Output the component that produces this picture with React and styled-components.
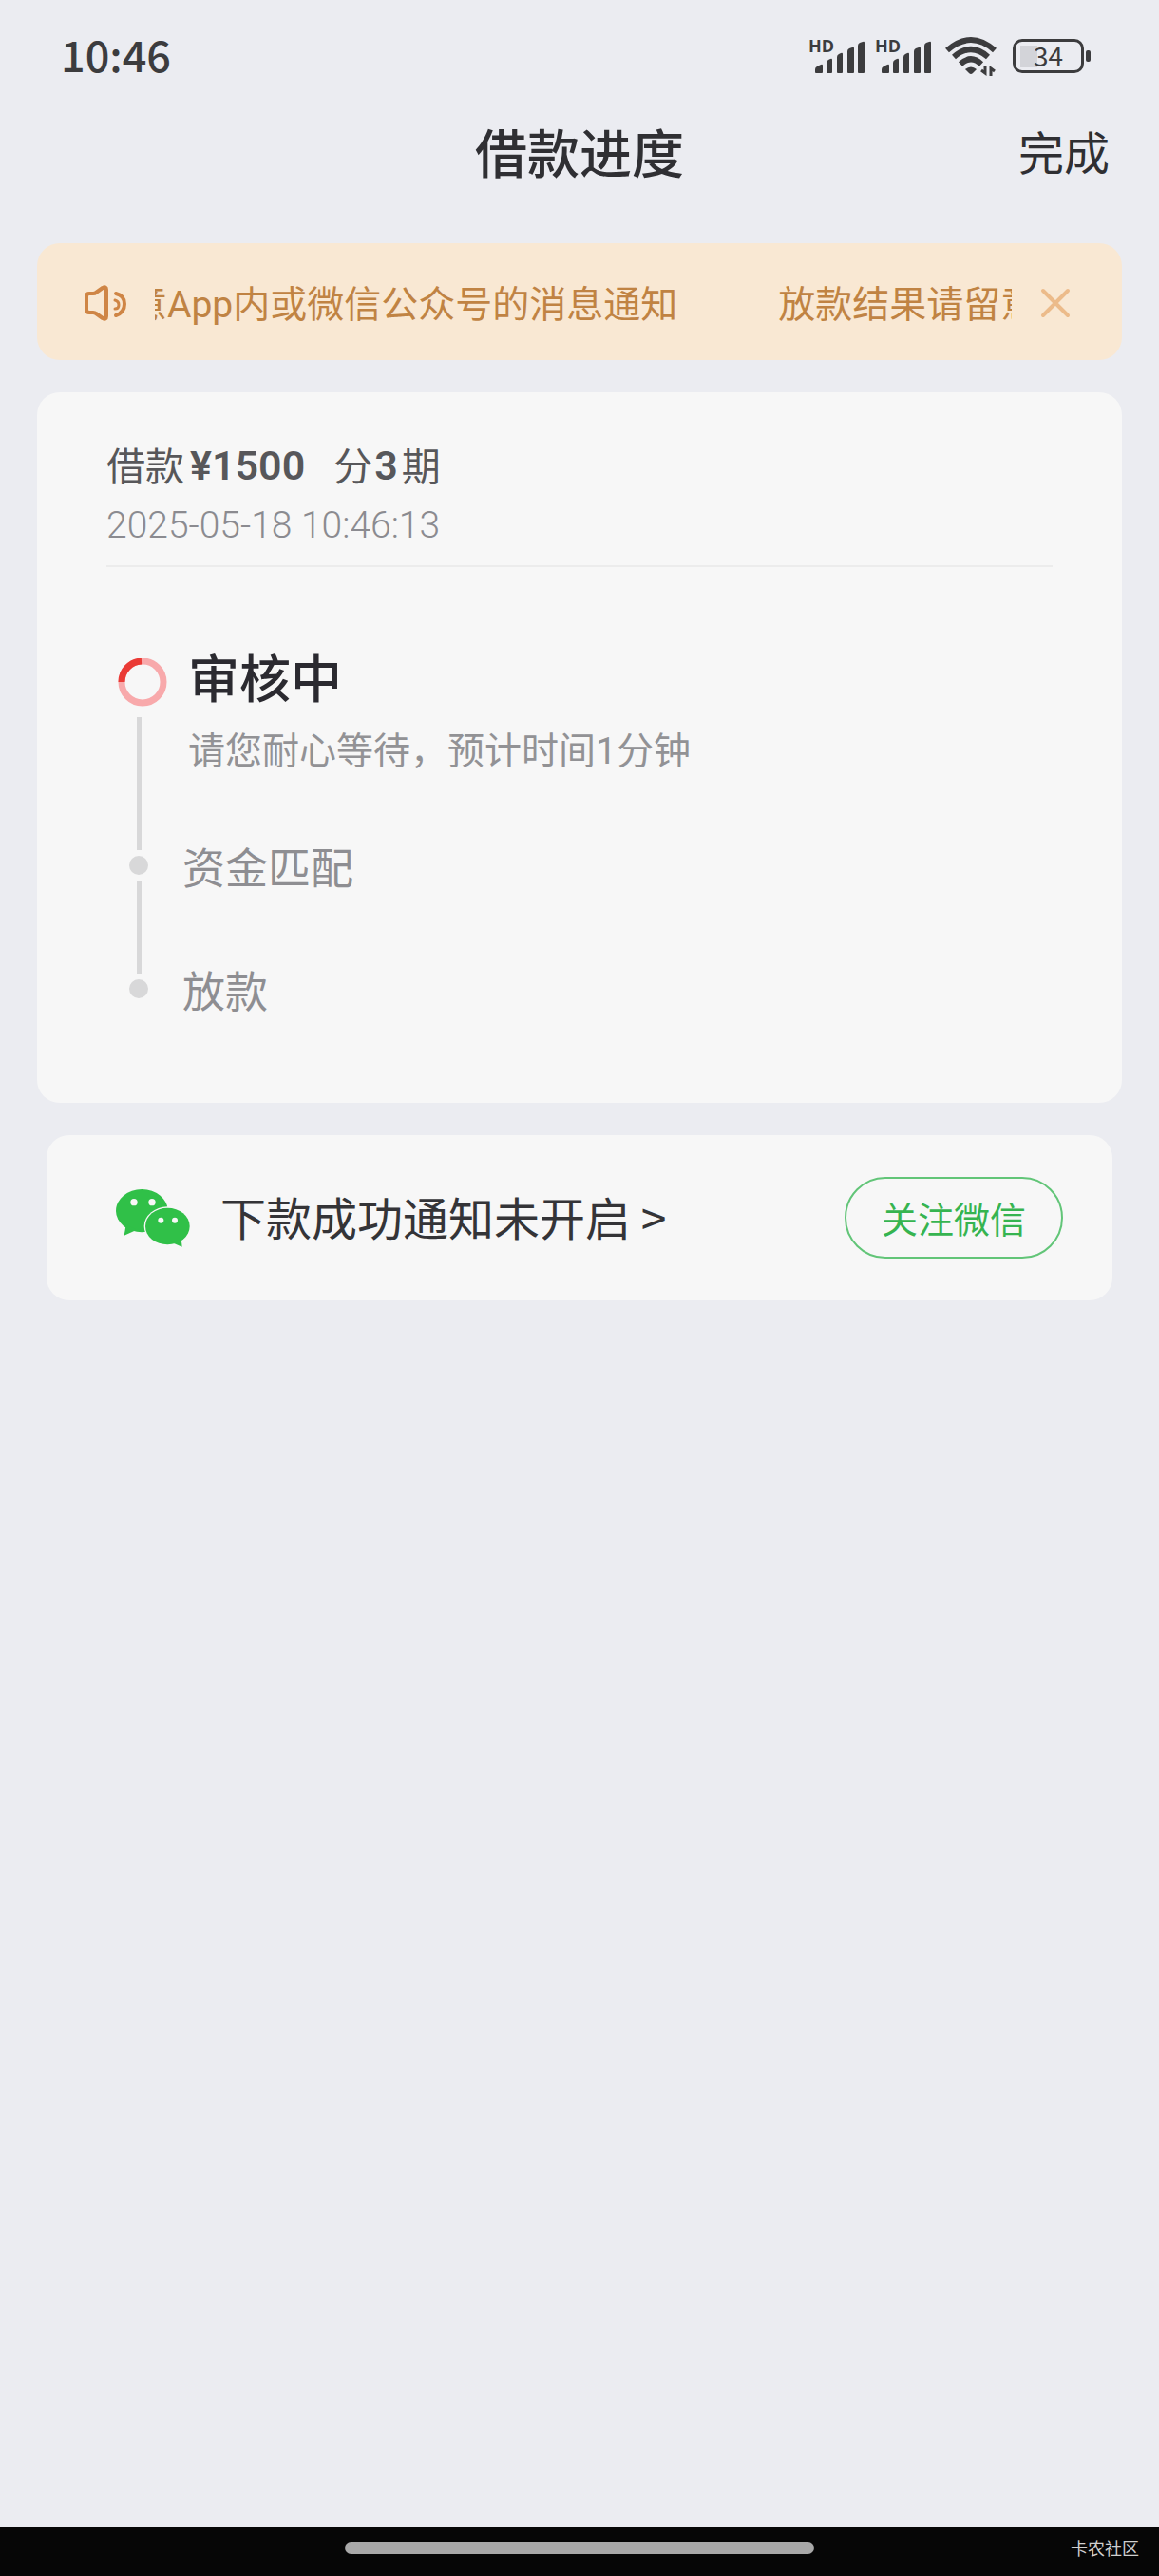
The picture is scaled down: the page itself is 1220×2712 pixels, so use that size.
import React from 'react';

import styled, { createGlobalStyle } from 'styled-components';

const GlobalStyle = createGlobalStyle`
  * {
    box-sizing: border-box;
  }
  body {
    margin: 0;
    background: #ebecf1;
    font-family: 'Noto Sans CJK SC', sans-serif;
    color: #2f2f33;
  }
  button {
    padding: 0;
    border: none;
    background: none;
    font-family: inherit;
    cursor: pointer;
  }
  svg {
    display: block;
    flex-shrink: 0;
  }
`;

const Page = styled.div`
  display: flex;
  flex-direction: column;
  min-height: 100vh;
`;

const StatusBar = styled.div`
  display: flex;
  align-items: center;
  justify-content: space-between;
  height: 118px;
  padding: 0 72px 0 64px;
  color: #3c3c3e;
`;

const Clock = styled.span`
  padding-bottom: 6px;
  font-size: 45px;
  font-weight: 500;
`;

const StatusIcons = styled.div`
  display: flex;
  align-items: center;
  gap: 14px;
`;

const Signals = styled.div`
  display: flex;
  gap: 10px;
`;

const Battery = styled.div`
  display: flex;
  align-items: center;
  gap: 2px;
  &::after {
    content: '';
    width: 5px;
    height: 12px;
    border-radius: 2px;
    background: #3c3c3e;
  }
`;

const BatteryBody = styled.div`
  display: flex;
  justify-content: center;
  width: 75px;
  height: 36px;
  border: 3px solid #3c3c3e;
  border-radius: 10px;
  background: linear-gradient(#d3d4d9, #d3d4d9) 5px center / 18px 23px no-repeat;
  font-size: 28px;
  line-height: 28px;
`;

const Header = styled.header`
  display: grid;
  grid-template-columns: 1fr auto 1fr;
  align-items: center;
  height: 80px;
  padding: 0 52px;
`;

const HeaderTitle = styled.h1`
  grid-column: 2;
  margin: 0;
  font-size: 55px;
  font-weight: 500;
  line-height: 80px;
`;

const DoneButton = styled.button`
  justify-self: end;
  font-size: 48px;
  line-height: 80px;
  color: #2f2f33;
`;

const Main = styled.main`
  display: flex;
  flex-direction: column;
  gap: 34px;
  margin-top: 58px;
  padding: 0 39px;
`;

const Notice = styled.div`
  display: flex;
  align-items: center;
  gap: 28px;
  height: 123px;
  padding: 2px 52px 0 48px;
  border-radius: 24px;
  background: #f9e8d3;
  color: #c08343;
`;

const Marquee = styled.div`
  flex: 1;
  padding-top: 4px;
  overflow: hidden;
`;

const MarqueeTrack = styled.div`
  display: flex;
  gap: 106px;
  width: max-content;
  transform: translateX(-260px);
  font-family: 'Roboto', 'Noto Sans CJK SC', sans-serif;
  font-size: 39px;
  line-height: 56px;
  white-space: nowrap;
`;

const CloseButton = styled.button`
  display: flex;
  align-items: center;
  justify-content: center;
  width: 36px;
  height: 36px;
  color: #ecbb8a;
`;

const Card = styled.section`
  padding: 48px 73px 0;
  border-radius: 24px;
  background: #f7f7f7;
`;

const Summary = styled.div`
  padding-bottom: 16px;
  border-bottom: 2px solid #ececec;
`;

const Loan = styled.div`
  display: flex;
  align-items: center;
  font-size: 41px;
  line-height: 54px;
  color: #57575a;
`;

const Amount = styled.strong`
  margin: 0 6px;
  padding-top: 4px;
  font-family: 'Roboto', sans-serif;
  font-size: 43px;
  font-weight: 600;
  line-height: 50px;
`;

const Count = styled(Amount)`
  margin: 0 4px 0 2px;
`;

const Term = styled.span`
  margin-left: 24px;
`;

const LoanTime = styled.time`
  display: block;
  margin-top: 12px;
  font-family: 'Roboto', sans-serif;
  font-size: 39px;
  font-weight: 300;
  line-height: 52px;
  color: #8b8b90;
`;

const Steps = styled.ol`
  margin: 0;
  padding: 88px 0 0 12px;
  list-style: none;
`;

const Step = styled.li`
  display: flex;
  gap: ${({ $active }) => ($active ? 30 : 24)}px;
`;

const Marker = styled.div`
  display: flex;
  flex-direction: column;
  align-items: center;
  width: 44px;
  padding: ${({ $active }) => ($active ? 8 : 0)}px 0 6px;
  svg {
    align-self: flex-start;
    margin-bottom: 4px;
  }
`;

const Dot = styled.span`
  width: 20px;
  height: 20px;
  border-radius: 50%;
  background: #d8d8d9;
`;

const Line = styled.span`
  flex: 1;
  width: 5px;
  margin-top: 7px;
  background: #d8d8d9;
`;

const ActiveBody = styled.div`
  padding-bottom: 84px;
`;

const ActiveTitle = styled.h2`
  margin: 0 0 26px;
  font-size: 54px;
  font-weight: 500;
  line-height: 54px;
  color: #2b2a30;
`;

const Hint = styled.p`
  margin: 0;
  font-family: 'Roboto', 'Noto Sans CJK SC', sans-serif;
  font-size: 39px;
  line-height: 52px;
  color: #929295;
`;

const StepTitle = styled.h2`
  margin: 0;
  padding-bottom: 108px;
  font-size: 45px;
  font-weight: 400;
  line-height: 22px;
  color: #8e8e92;
`;

const WechatCard = styled.section`
  display: flex;
  align-items: center;
  height: 174px;
  margin: 0 10px;
  padding: 0 52px 0 73px;
  border-radius: 24px;
  background: #f7f7f7;
`;

const WechatLink = styled.a`
  flex: 1;
  margin-left: 32px;
  padding-bottom: 4px;
  font-size: 48px;
  line-height: 72px;
  color: #343437;
  text-decoration: none;
`;

const FollowButton = styled.button`
  height: 86px;
  padding: 0 37px 2px;
  border: 2px solid #62c578;
  border-radius: 43px;
  font-size: 38px;
  color: #36b450;
`;

const NavBar = styled.footer`
  display: grid;
  grid-template-columns: 1fr 42% 1fr;
  align-items: center;
  height: 52px;
  margin-top: auto;
  padding: 0 21px 8px;
  background: #060606;
`;

const HomeIndicator = styled.span`
  grid-column: 2;
  height: 13px;
  border-radius: 7px;
  background: #a8a8a8;
`;

const Credit = styled.span`
  justify-self: end;
  font-size: 18px;
  line-height: 24px;
  color: #cfcfcf;
`;

const SignalIcon = () => (
  <svg width="60" height="50" viewBox="-2 -6 60 50" fill="currentColor">
    <text
      x="-1"
      y="15"
      fontFamily="Open Sans, sans-serif"
      fontSize="18"
      fontWeight="700"
    >
      HD
    </text>
    <path d="M6 36v-3q0-2 2-3l4-2q2-1 2 1v7q0 1-1 1H7q-1 0-1-1z" />
    <path d="M18 36V26q0-2 2-3l2-1q2-1 2 1v13q0 1-1 1h-4q-1 0-1-1z" />
    <path d="M29 36V20q0-2 2-3l2-1q2-1 2 1v19q0 1-1 1h-4q-1 0-1-1z" />
    <path d="M40 36V14q0-2 2-3l3-1q2-1 2 1v25q0 1-1 1h-5q-1 0-1-1z" />
    <path d="M51 36V8q0-2 2-3l3-1q2-1 2 1v31q0 1-1 1h-5q-1 0-1-1z" />
  </svg>
);

const WifiIcon = () => (
  <svg width="58" height="44" viewBox="0 0 58 44" fill="none" stroke="currentColor">
    <path d="M3 16Q28-6 53 16" strokeWidth="6" />
    <path d="M10 23Q28 7 46 23" strokeWidth="6" />
    <path d="M17 30.5Q28 20 39 30.5" strokeWidth="6" />
    <path d="M22 36q6-5 12 0l-4 4q-2 2-4 0z" fill="currentColor" stroke="none" />
    <path d="M43 32v8l-4-3M49 43v-8l4 3" strokeWidth="3" />
  </svg>
);

const SpeakerIcon = () => (
  <svg
    width="48"
    height="40"
    viewBox="0 0 48 40"
    fill="none"
    stroke="#cf8545"
    strokeWidth="4"
    strokeLinecap="round"
    strokeLinejoin="round"
  >
    <path d="M4 13q0-3 3-3h4q2 0 3-1l7-5q4-2 4 2v28q0 4-4 2l-7-5q-1-1-3-1H7q-3 0-3-3z" />
    <path d="M35 10q9 2 9 11t-9 12" />
    <path d="M34 17q4 1 4 5t-4 4" strokeWidth="3" />
  </svg>
);

const CloseIcon = () => (
  <svg width="32" height="32" viewBox="0 0 32 32" stroke="currentColor" strokeWidth="4">
    <path d="M3 3l26 26M29 3L3 29" strokeLinecap="round" />
  </svg>
);

const ProgressRing = () => (
  <svg width="52" height="51" viewBox="0 0 52 51" fill="none" strokeWidth="7">
    <circle cx="26" cy="25" r="22" stroke="#f8a9ab" />
    <path d="M4 25A22 22 0 0 1 25 3" stroke="#ea3b36" />
  </svg>
);

const WechatIcon = () => (
  <svg width="78" height="61" viewBox="0 0 234 183" fill="#30c048">
    <ellipse cx="82" cy="68" rx="82" ry="68" />
    <path d="M32 112L26 146L66 128z" />
    <ellipse cx="163" cy="117" rx="74" ry="62" fill="#f7f7f7" />
    <ellipse cx="163" cy="117" rx="70" ry="58" />
    <path d="M206 156L209 182L176 168z" />
    <g fill="#f7f7f7">
      <circle cx="57" cy="41" r="11" />
      <circle cx="114" cy="41" r="11" />
      <circle cx="142" cy="98" r="9" />
      <circle cx="186" cy="98" r="9" />
    </g>
  </svg>
);

const notice = '放款结果请留意App内或微信公众号的消息通知';

const App = () => {
  return (
    <Page>
      <GlobalStyle />
      <StatusBar>
        <Clock>10:46</Clock>
        <StatusIcons>
          <Signals>
            <SignalIcon />
            <SignalIcon />
          </Signals>
          <WifiIcon />
          <Battery>
            <BatteryBody>34</BatteryBody>
          </Battery>
        </StatusIcons>
      </StatusBar>
      <Header>
        <HeaderTitle>借款进度</HeaderTitle>
        <DoneButton type="button">完成</DoneButton>
      </Header>
      <Main>
        <Notice>
          <SpeakerIcon />
          <Marquee>
            <MarqueeTrack>
              <span>{notice}</span>
              <span>{notice}</span>
            </MarqueeTrack>
          </Marquee>
          <CloseButton type="button" aria-label="关闭">
            <CloseIcon />
          </CloseButton>
        </Notice>
        <Card>
          <Summary>
            <Loan>
              借款<Amount>¥1500</Amount>
              <Term>分</Term>
              <Count>3</Count>期
            </Loan>
            <LoanTime>2025-05-18 10:46:13</LoanTime>
          </Summary>
          <Steps>
            <Step $active>
              <Marker $active>
                <ProgressRing />
                <Line />
              </Marker>
              <ActiveBody>
                <ActiveTitle>审核中</ActiveTitle>
                <Hint>请您耐心等待，预计时间1分钟</Hint>
              </ActiveBody>
            </Step>
            <Step>
              <Marker>
                <Dot />
                <Line />
              </Marker>
              <StepTitle>资金匹配</StepTitle>
            </Step>
            <Step>
              <Marker>
                <Dot />
              </Marker>
              <StepTitle>放款</StepTitle>
            </Step>
          </Steps>
        </Card>
        <WechatCard>
          <WechatIcon />
          <WechatLink href="#wechat">下款成功通知未开启 &gt;</WechatLink>
          <FollowButton type="button">关注微信</FollowButton>
        </WechatCard>
      </Main>
      <NavBar>
        <HomeIndicator />
        <Credit>卡农社区</Credit>
      </NavBar>
    </Page>
  );
};

export default App;
